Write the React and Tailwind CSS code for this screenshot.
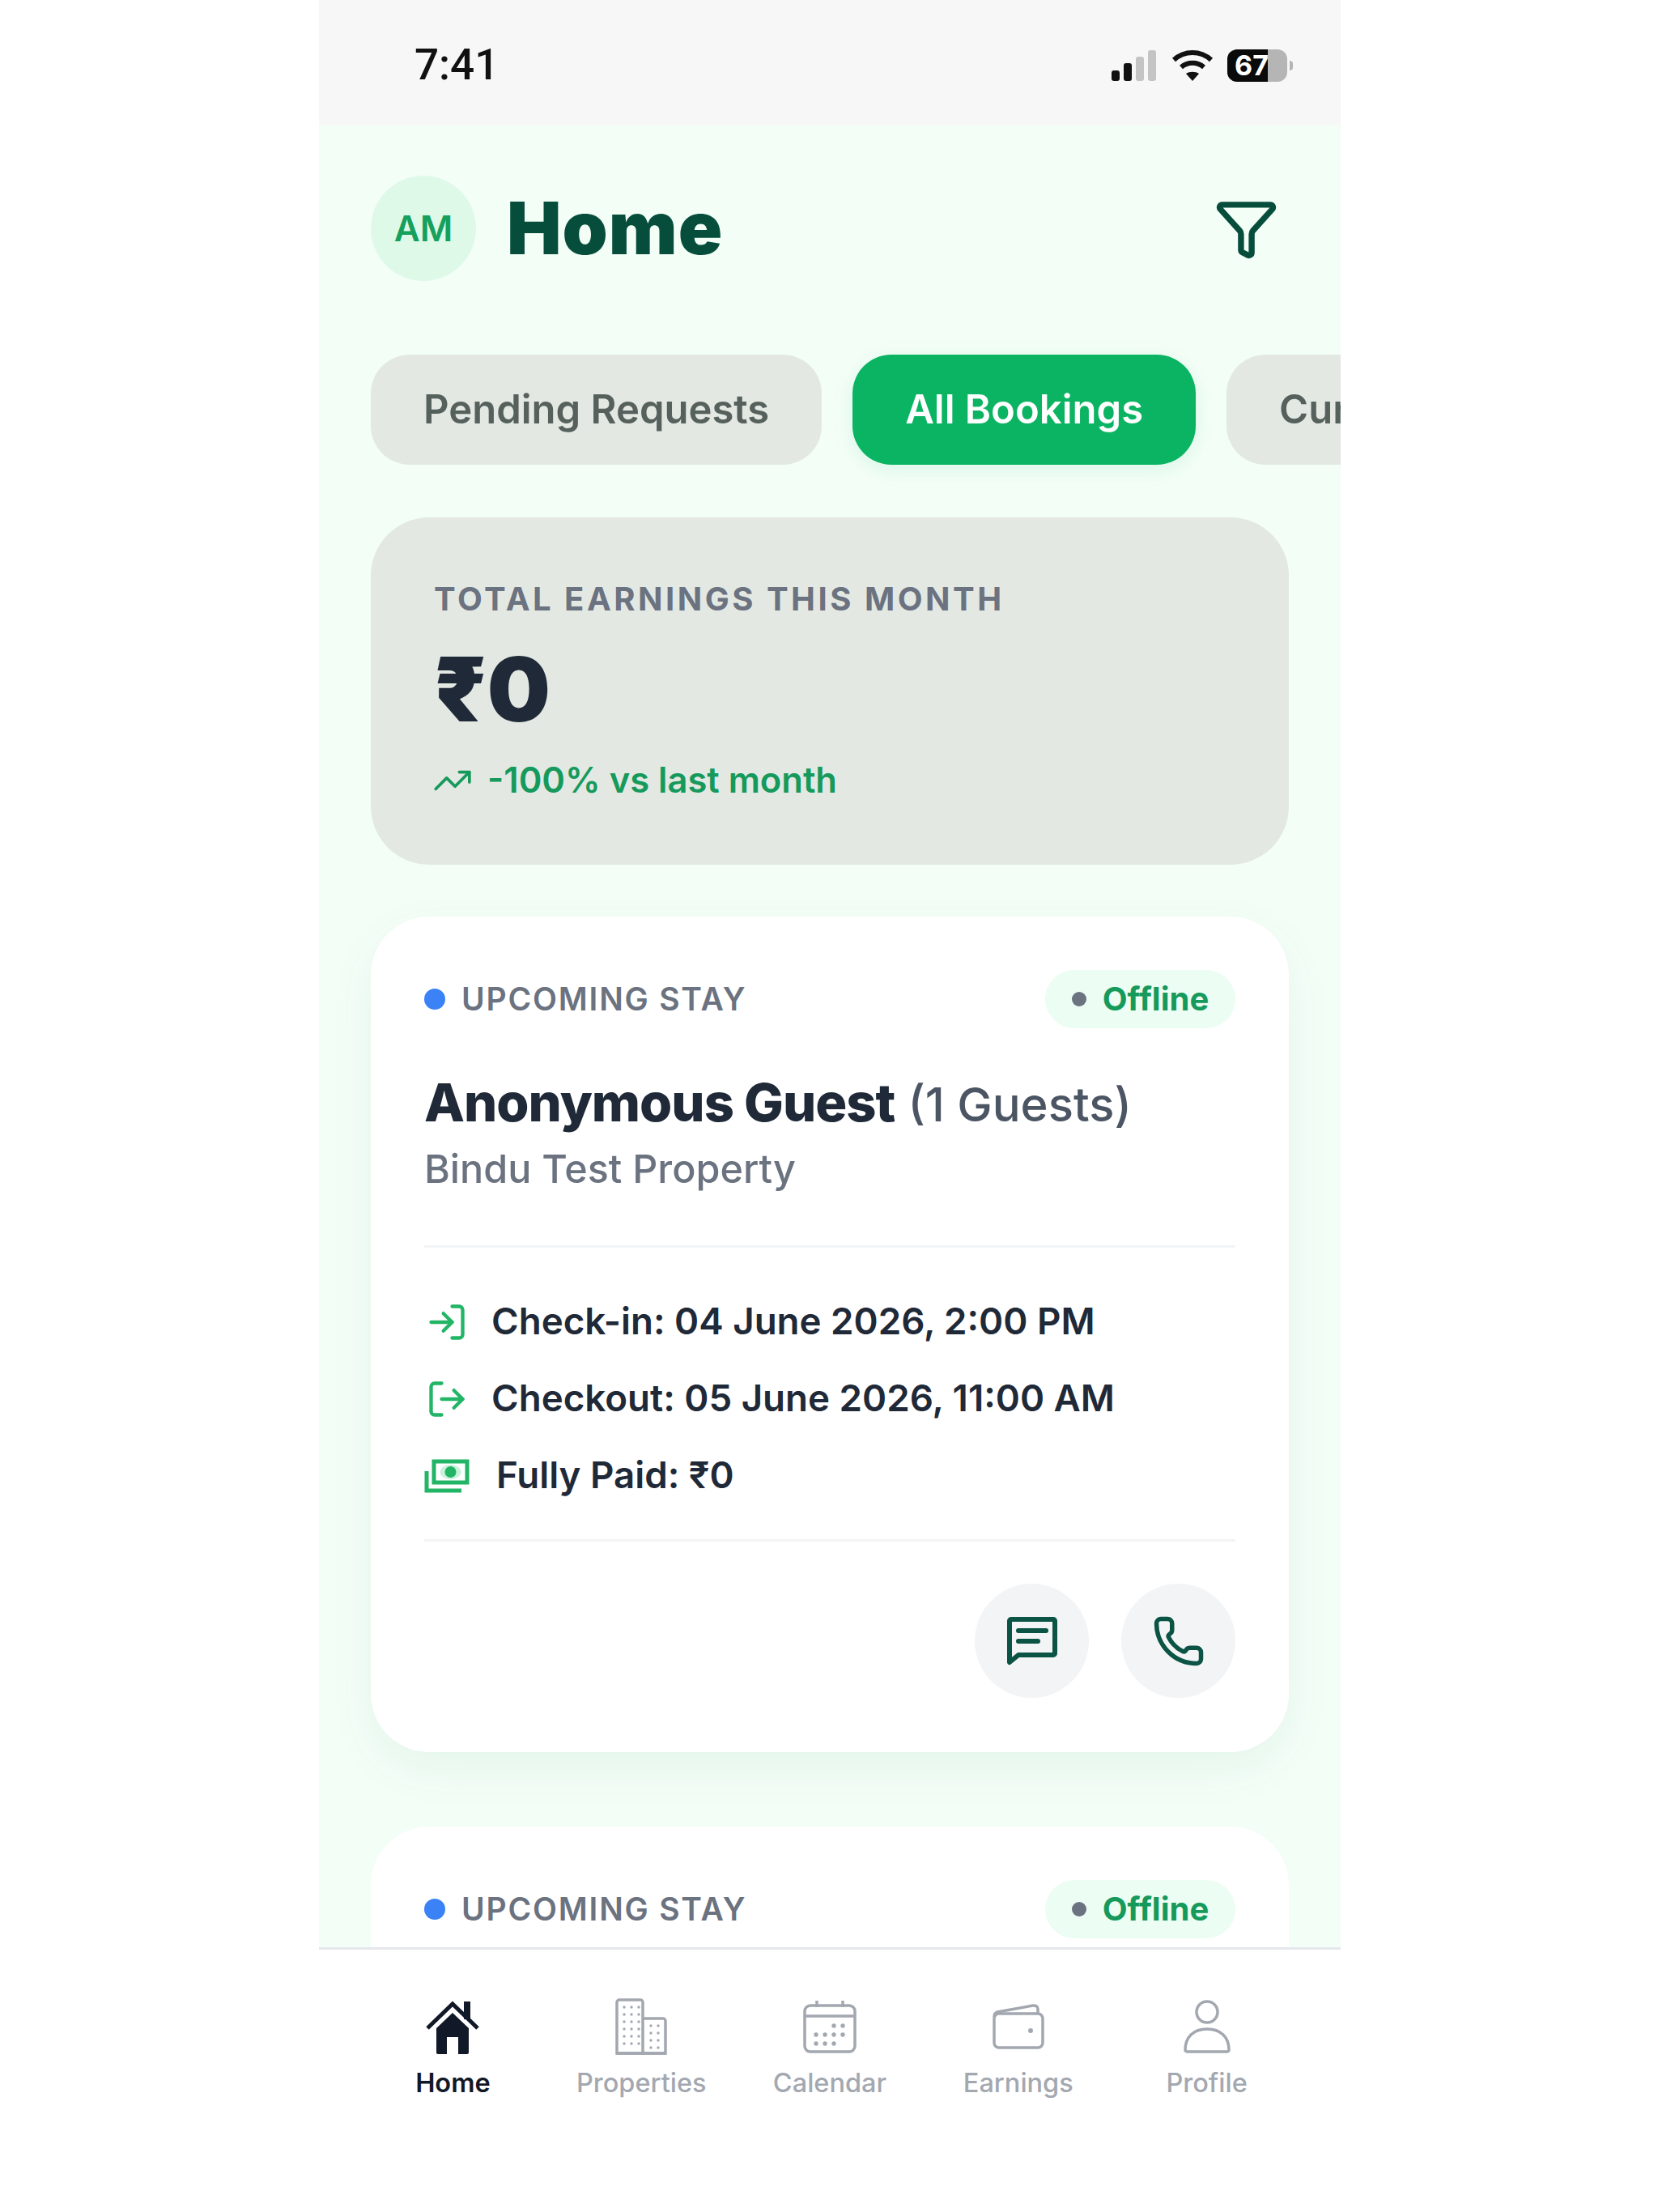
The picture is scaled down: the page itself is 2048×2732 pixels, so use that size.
// Tela Home do app de reservas (host), com status bar, abas, card de ganhos e lista.
import { Funnel, LogIn, LogOut, Phone, TrendingUp } from 'lucide-react';

const TABS = [
  { label: 'Pending Requests', active: false },
  { label: 'All Bookings', active: true },
  { label: 'Cur', active: false },
];

function StatusIcons() {
  return (
    <div className="flex items-center gap-[16px]">
      <svg width="56" height="40" viewBox="0 0 56 40" fill="#111" className="-ml-[2px] mr-[2px]">
        <rect x="1" y="26" width="10" height="13" rx="3" />
        <rect x="16" y="17" width="10" height="22" rx="3" />
        <rect x="31" y="9" width="10" height="30" rx="3" fill="#c4c4c4" />
        <rect x="46" y="1" width="10" height="38" rx="3" fill="#c4c4c4" />
      </svg>
      <svg width="54" height="40" viewBox="0 0 52 40" fill="none" stroke="#111" strokeWidth="6">
        <path d="M3 13C16 1 36 1 49 13" />
        <path d="M12 22c8-7 20-7 28 0" />
        <path d="M26 39l-8-9c4-3 12-3 16 0z" fill="#111" stroke="none" />
      </svg>
      <div className="flex items-center gap-[3px]">
        <div className="relative w-[74px] h-[40px] rounded-[12px] bg-[#b5b5b5] flex items-center">
          <div className="absolute inset-y-0 left-0 w-[50px] rounded-l-[12px] bg-[#0a0a0a]" />
          <span className="relative w-[60px] text-center text-white text-[34px] font-bold leading-none">67</span>
        </div>
        <div className="w-[4px] h-[12px] rounded-r bg-[#b5b5b5]" />
      </div>
    </div>
  );
}

function MoneyIcon() {
  return (
    <svg width="56" height="42" viewBox="0 0 56 42" fill="none" stroke="#22b566" strokeWidth="5">
      <rect x="12" y="3" width="41" height="26" />
      <ellipse cx="32.5" cy="16" rx="13" ry="9" fill="#c9f2da" stroke="none" />
      <circle cx="32.5" cy="16" r="7" fill="#22b566" stroke="none" />
      <path d="M3 15v24h43" />
    </svg>
  );
}

function ChatIcon() {
  return (
    <svg width="62" height="60" viewBox="0 0 62 60" fill="none" stroke="#0b5344" strokeWidth="6">
      <path d="M3 56V5a2 2 0 0 1 2-2h52a2 2 0 0 1 2 2v40a2 2 0 0 1-2 2H14z" strokeLinejoin="round" />
      <path d="M14 17h34M14 30h24" strokeLinecap="round" />
    </svg>
  );
}

function HomeIcon() {
  return (
    <svg width="68" height="68" viewBox="0 0 68 68">
      <path d="M14 36L34 17l20 19v30a2 2 0 0 1-2 2H41V47H27v21H16a2 2 0 0 1-2-2z" fill="#111827" />
      <path d="M3 36L34 6l31 30" fill="none" stroke="#111827" strokeWidth="5" />
      <rect x="48" y="3" width="8" height="22" fill="#111827" />
    </svg>
  );
}

function BuildingIcon() {
  const dots = [];
  for (let r = 0; r < 6; r++) {
    for (let c = 0; c < 3; c++) dots.push([11 + c * 9, 11 + r * 9]);
  }
  for (let r = 0; r < 4; r++) {
    for (let c = 0; c < 2; c++) dots.push([44 + c * 9, 34 + r * 9]);
  }
  return (
    <svg width="64" height="70" viewBox="0 0 64 70" fill="none" stroke="#a3a8b0" strokeWidth="3.5">
      <path d="M2 68V5a3 3 0 0 1 3-3h26a3 3 0 0 1 3 3v63z" />
      <path d="M34 25h25a3 3 0 0 1 3 3v40H34" />
      <path d="M1 68h62" />
      {dots.map(([x, y]) => <circle key={`${x}-${y}`} cx={x} cy={y} r="1.7" fill="#a3a8b0" stroke="none" />)}
    </svg>
  );
}

function CalendarIcon() {
  const dots = [[36, 32], [47, 32], [14, 43], [25, 43], [36, 43], [47, 43], [14, 54], [25, 54], [36, 54]];
  return (
    <svg width="66" height="66" viewBox="0 0 66 66" fill="none" stroke="#a3a8b0" strokeWidth="3.5">
      <rect x="2" y="7" width="62" height="57" rx="7" />
      <path d="M2 20h62M17 1v8M49 1v8" />
      {dots.map(([x, y]) => <circle key={`${x}-${y}`} cx={x + 2} cy={y} r="2.7" fill="#a3a8b0" stroke="none" />)}
    </svg>
  );
}

function WalletIcon() {
  return (
    <svg width="64" height="56" viewBox="0 0 64 56" fill="none" stroke="#a3a8b0" strokeWidth="3.5">
      <rect x="2" y="12" width="60" height="42" rx="6" />
      <path d="M2 16c0-3 1-5 4-6L50 2c3-.5 6 1 6 4v6" />
      <circle cx="47" cy="33" r="3" fill="#a3a8b0" stroke="none" />
    </svg>
  );
}

function UserIcon() {
  return (
    <svg width="60" height="66" viewBox="0 0 60 66" fill="none" stroke="#a3a8b0" strokeWidth="3.5">
      <circle cx="30" cy="15" r="13" />
      <path d="M3 62c0-16 10-26 27-26s27 10 27 26c0 1-1 2-2 2H5c-1 0-2-1-2-2z" />
    </svg>
  );
}

const NAV = [
  { label: 'Home', icon: HomeIcon, active: true },
  { label: 'Properties', icon: BuildingIcon },
  { label: 'Calendar', icon: CalendarIcon },
  { label: 'Earnings', icon: WalletIcon },
  { label: 'Profile', icon: UserIcon },
];

function StayHeader() {
  return (
    <div className="flex items-center justify-between">
      <div className="flex items-center gap-[20px]">
        <span className="w-[26px] h-[26px] rounded-full bg-[#3b82f6]" />
        <span className="text-[39px] font-semibold tracking-[1.8px] text-[#6b7280]">UPCOMING STAY</span>
      </div>
      <div className="w-[235px] h-[72px] rounded-full bg-[#ecfdf3] flex items-center justify-center gap-[20px]">
        <span className="w-[18px] h-[18px] rounded-full bg-[#6b7280]" />
        <span className="text-[40px] font-bold text-[#159a5c]">Offline</span>
      </div>
    </div>
  );
}

function InfoRow({ icon, children, gap = 'gap-[27px]' }) {
  return (
    <div className={`flex items-center h-[95px] ${gap}`}>
      <span className="w-[56px] flex justify-center">{icon}</span>
      <span className="text-[45.7px] font-semibold text-[#1f2937]">{children}</span>
    </div>
  );
}

export default function App() {
  return (
    <div className="bg-white font-['Inter',sans-serif]">
      <div className="ml-[394px] w-[1262px] h-[2732px] flex flex-col overflow-hidden">
        {/* status bar */}
        <div className="h-[154px] shrink-0 bg-[#f7f7f7] flex items-center justify-between pl-[118px] pr-[59px] pt-[7px]">
          <span className="text-[53px] font-medium text-[#111] font-['Roboto',sans-serif]">7:41</span>
          <StatusIcons />
        </div>

        <div className="h-[2251px] shrink-0 bg-[#f3fef7] overflow-hidden">
          <div className="flex items-center justify-between pl-[64px] pr-[77px] pt-[62px]">
            <div className="flex items-center gap-[38px]">
              <div className="w-[130px] h-[130px] rounded-full bg-[#dff9e9] flex items-center justify-center text-[44px] font-semibold text-[#16a05d]">
                AM
              </div>
              <h1 className="text-[90px] leading-[132px] font-black tracking-[1px] text-[#064e3b]">Home</h1>
            </div>
            <Funnel size={79} strokeWidth={2.25} strokeLinejoin="miter" color="#064e3b" />
          </div>

          <div className="flex gap-[38px] pl-[64px] mt-[90px]">
            {TABS.map((t) => (
              <div
                key={t.label}
                className={
                  t.active
                    ? 'shrink-0 h-[136px] px-[65px] rounded-[48px] flex items-center text-[49px] font-semibold whitespace-nowrap bg-[#0ab462] text-white shadow-[0_6px_24px_rgba(11,181,97,0.1)]'
                    : 'shrink-0 h-[136px] px-[65px] rounded-[48px] flex items-center text-[49px] font-semibold whitespace-nowrap bg-[#e3e8e3] text-[#56605c]'
                }
              >
                {t.label}
              </div>
            ))}
          </div>

          <div className="mx-[64px] w-[1134px] mt-[65px] h-[429px] rounded-[72px] bg-[#e3e8e3] px-[78px] pt-[76px]">
            <div className="text-[40px] leading-[50px] font-bold tracking-[3.5px] text-[#6b7280]">TOTAL EARNINGS THIS MONTH</div>
            <div className="mt-[31px] text-[110px] leading-[110px] font-black text-[#1f2937]">₹0</div>
            <div className="mt-[25px] -ml-[2px] flex items-center gap-[18px]">
              <TrendingUp size={50} strokeWidth={1.75} color="#159a5c" />
              <span className="text-[43.5px] font-semibold text-[#159a5c]">-100% vs last month</span>
            </div>
          </div>

          <div className="mx-[64px] w-[1134px] mt-[64px] h-[1032px] rounded-[72px] bg-white px-[66px] pt-[66px] shadow-[0_20px_60px_rgba(20,100,60,0.06)]">
            <StayHeader />
            <div className="mt-[52px] flex items-baseline gap-[16px] whitespace-nowrap">
              <span className="text-[65px] leading-[80px] font-extrabold tracking-[-1px] text-[#1f2937]">Anonymous Guest</span>
              <span className="text-[58px] leading-[80px] font-medium text-[#4b5563]">(1 Guests)</span>
            </div>
            <div className="mt-[10px] text-[48.5px] leading-[60px] font-medium text-[#6b7280]">Bindu Test Property</div>
            <div className="mt-[64px] h-[3px] bg-[#f3f4f6]" />
            <div className="mt-[44px]">
              <InfoRow icon={<LogIn size={52} strokeWidth={2} color="#22b566" />}>Check-in: 04 June 2026, 2:00 PM</InfoRow>
              <InfoRow icon={<LogOut size={52} strokeWidth={2} color="#22b566" />}>Checkout: 05 June 2026, 11:00 AM</InfoRow>
              <InfoRow icon={<MoneyIcon />} gap="gap-[33px]">Fully Paid: ₹0</InfoRow>
            </div>
            <div className="mt-[31px] h-[3px] bg-[#f3f4f6]" />
            <div className="mt-[52px] flex justify-end gap-[40px]">
              <button className="w-[141px] h-[141px] rounded-full bg-[#f3f4f6] flex items-center justify-center">
                <ChatIcon />
              </button>
              <button className="w-[141px] h-[141px] rounded-full bg-[#f3f4f6] flex items-center justify-center">
                <Phone size={66} strokeWidth={2} color="#0b5344" />
              </button>
            </div>
          </div>

          <div className="mx-[64px] w-[1134px] mt-[92px] h-[400px] rounded-[72px] bg-white px-[66px] pt-[66px]">
            <StayHeader />
          </div>
        </div>

        {/* tab bar */}
        <div className="flex-1 bg-white border-t-[3px] border-[#e5e7eb] pt-[59px] px-[49px] grid grid-cols-5 content-start">
          {NAV.map(({ label, icon: Icon, active }) => (
            <div key={label} className="flex flex-col items-center">
              <div className="h-[72px] flex items-center justify-center"><Icon /></div>
              <span className={active ? 'mt-[10px] text-[32.5px] font-semibold text-[#111827]' : 'mt-[10px] text-[32.5px] font-medium text-[#a3a8b0]'}>
                {label}
              </span>
            </div>
          ))}
        </div>
      </div>
    </div>
  );
}
